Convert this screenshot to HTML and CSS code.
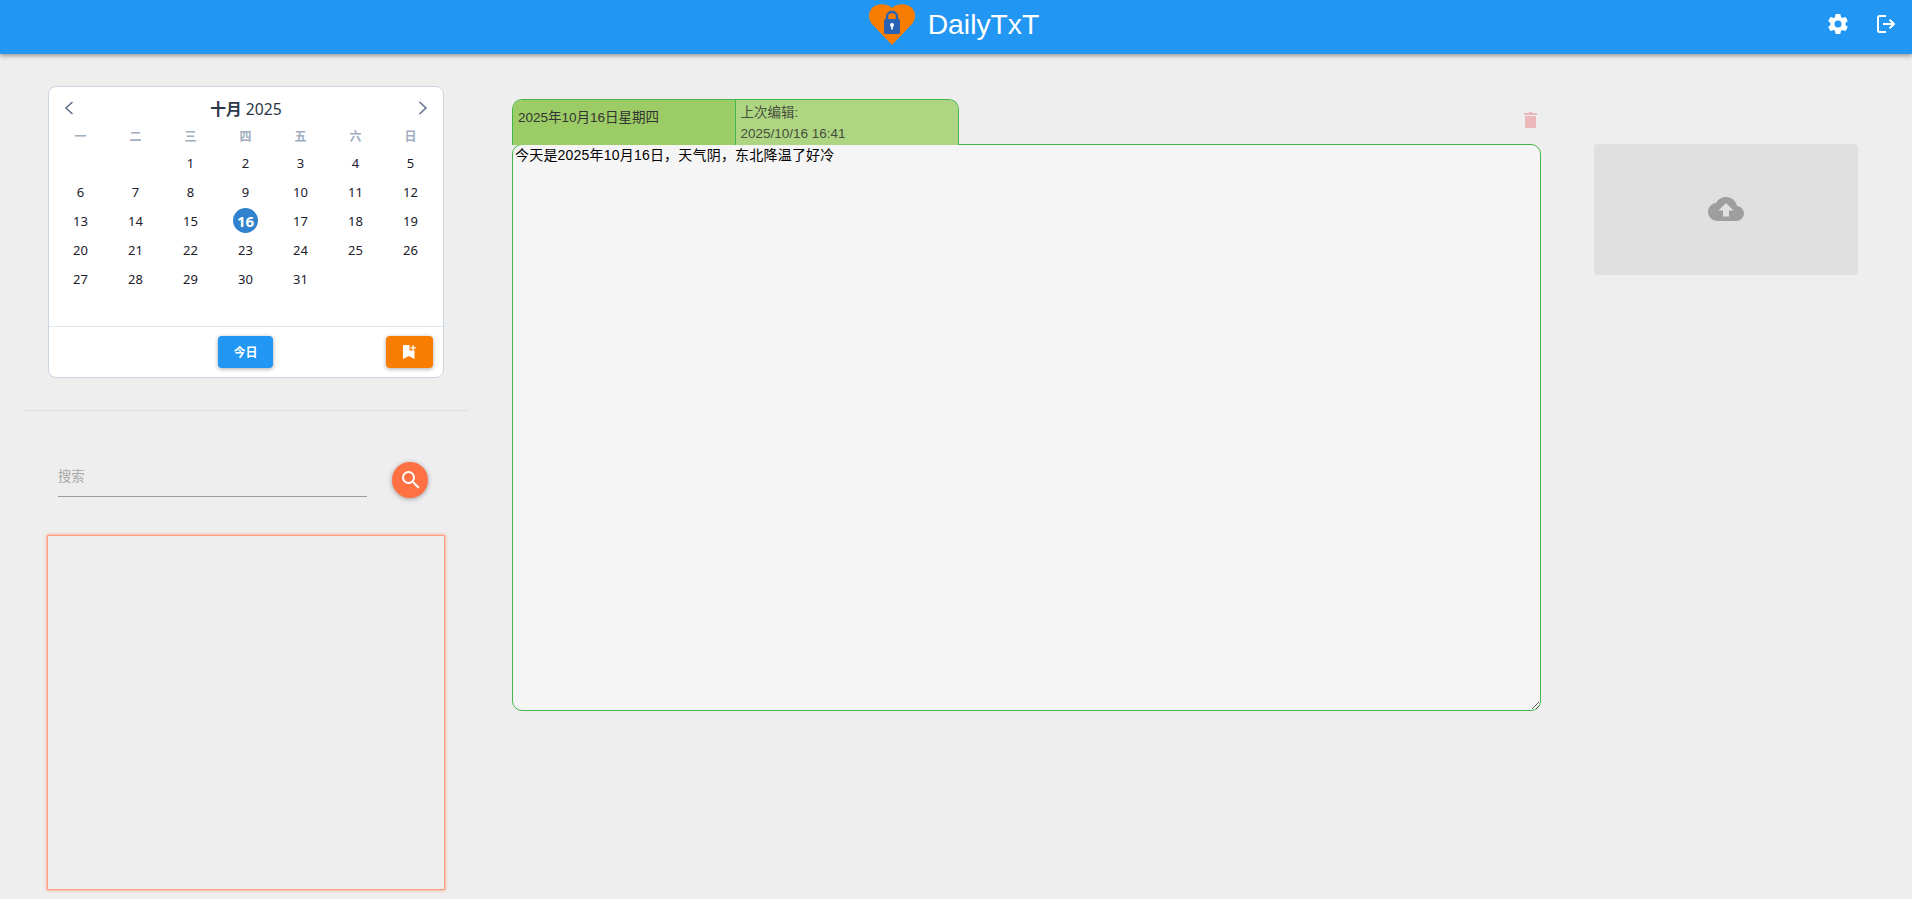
FILE: index.html
```html
<!DOCTYPE html>
<html lang="zh">
<head>
    <meta charset="UTF-8">
    <meta name="viewport" content="width=device-width, initial-scale=1.0">
    <title>DailyTxT</title>

    <link rel="stylesheet" href="styles.css">
</head>
<body>
    <header class="topbar">
        <div></div>
        <div class="brand">
            <svg class="brand-logo" viewBox="0 0 46 42">
                <path class="logo-heart" d="M23 41L3 20C-1 15 -1 8 3 4C8 -1 18 -1 23 4C28 -1 38 -1 43 4C47 8 47 15 43 20Z"/>
                <path class="logo-shackle" d="M18 16V12.500C18 6.500 28 6.500 28 12.500V16"/>
                <rect class="logo-lock" x="15" y="15" width="16" height="15" rx="1.500"/>
                <circle class="logo-key" cx="23" cy="21" r="2"/>
                <rect class="logo-key" x="22.200" y="21" width="1.600" height="4.500"/>
            </svg>
            <span class="brand-name">DailyTxT</span>
        </div>
        <div class="topbar-actions">
            <svg class="icon-settings" viewBox="0 0 24 24"><path d="M12,15.5A3.5,3.5 0 0,1 8.5,12A3.5,3.5 0 0,1 12,8.5A3.5,3.5 0 0,1 15.5,12A3.5,3.5 0 0,1 12,15.5M19.43,12.97C19.47,12.65 19.5,12.33 19.5,12C19.5,11.67 19.47,11.34 19.43,11L21.54,9.37C21.73,9.22 21.78,8.95 21.66,8.73L19.66,5.27C19.54,5.05 19.27,4.96 19.05,5.05L16.56,6.05C16.04,5.66 15.5,5.32 14.87,5.07L14.5,2.42C14.46,2.18 14.25,2 14,2H10C9.75,2 9.54,2.18 9.5,2.42L9.13,5.07C8.5,5.32 7.96,5.66 7.44,6.05L4.95,5.05C4.73,4.96 4.46,5.05 4.34,5.27L2.34,8.73C2.21,8.95 2.27,9.22 2.46,9.37L4.57,11C4.53,11.34 4.5,11.67 4.5,12C4.5,12.33 4.53,12.65 4.57,12.97L2.46,14.63C2.27,14.78 2.21,15.05 2.34,15.27L4.34,18.73C4.46,18.95 4.73,19.03 4.95,18.95L7.44,17.94C7.96,18.34 8.5,18.68 9.13,18.93L9.5,21.58C9.54,21.82 9.75,22 10,22H14C14.25,22 14.46,21.82 14.5,21.58L14.87,18.93C15.5,18.67 16.04,18.34 16.56,17.94L19.05,18.95C19.27,19.03 19.54,18.95 19.66,18.73L21.66,15.27C21.78,15.05 21.73,14.78 21.54,14.63L19.43,12.97Z"/></svg>
            <svg class="icon-logout" viewBox="0 0 18 18"><path d="M9 1H2.500C1.700 1 1 1.700 1 2.500V15.500C1 16.300 1.700 17 2.500 17H9M6 9H17M12.500 4.800L17 9L12.500 13.200"/></svg>
        </div>
    </header>

    <main class="page">
        <aside class="sidebar">
            <section class="calendar">
                <div class="calendar-head">
                    <svg class="calendar-nav" viewBox="0 0 10 14"><path d="M8.500 1L2 7L8.500 13"/></svg>
                    <div class="calendar-title"><b>十月</b> 2025</div>
                    <svg class="calendar-nav" viewBox="0 0 10 14"><path d="M1.500 1L8 7L1.500 13"/></svg>
                </div>
                <div class="calendar-weekdays">
                    <span>一</span><span>二</span><span>三</span><span>四</span><span>五</span><span>六</span><span>日</span>
                </div>
                <div class="calendar-days">
                    <span></span><span></span>
                    <span>1</span><span>2</span><span>3</span><span>4</span><span>5</span>
                    <span>6</span><span>7</span><span>8</span><span>9</span><span>10</span><span>11</span><span>12</span>
                    <span>13</span><span>14</span><span>15</span><span class="today"><b>16</b></span><span>17</span><span>18</span><span>19</span>
                    <span>20</span><span>21</span><span>22</span><span>23</span><span>24</span><span>25</span><span>26</span>
                    <span>27</span><span>28</span><span>29</span><span>30</span><span>31</span>
                </div>
                <div class="calendar-foot">
                    <div></div>
                    <button class="btn btn-today">今日</button>
                    <button class="btn btn-bookmark">
                        <svg viewBox="0 0 13 14"><path d="M0 1C0 .4 .4 0 1 0H6.500V5.500H11.500V14L5.750 11L0 14Z"/><path d="M7.500 2.800H12.800M10.150 .2V5.400" class="bookmark-plus"/></svg>
                    </button>
                </div>
            </section>

            <hr class="divider">

            <div class="search">
                <input class="search-input" type="text" placeholder="搜索">
                <button class="search-btn">
                    <svg viewBox="0 0 24 24"><path d="M9.5,3A6.5,6.5 0 0,1 16,9.5C16,11.11 15.41,12.59 14.44,13.73L14.71,14H15.5L20.5,19L19,20.5L14,15.5V14.71L13.73,14.44C12.59,15.41 11.11,16 9.5,16A6.5,6.5 0 0,1 3,9.5A6.5,6.5 0 0,1 9.5,3M9.5,5C7,5 5,7 5,9.5C5,12 7,14 9.5,14C12,14 14,12 14,9.5C14,7 12,5 9.5,5Z"/></svg>
                </button>
            </div>

            <div class="results"></div>
        </aside>

        <section class="entry">
            <div class="entry-head">
                <div class="tabs">
                    <div class="tab tab-date">2025年10月16日星期四</div>
                    <div class="tab tab-edited">上次编辑:<br>2025/10/16 16:41</div>
                </div>
                <svg class="icon-trash" viewBox="0 0 13 16"><path d="M0 1H4.500L5 0H8L8.500 1H13V3H0ZM1 4H12V15C12 15.600 11.600 16 11 16H2C1.400 16 1 15.600 1 15Z"/></svg>
            </div>
            <textarea class="entry-text">今天是2025年10月16日，天气阴，东北降温了好冷</textarea>
        </section>

        <aside class="files">
            <div class="upload">
                <svg viewBox="0 0 24 24"><path d="M14,13V17H10V13H7L12,8L17,13M19.35,10.03C18.67,6.59 15.64,4 12,4C9.11,4 6.6,5.64 5.35,8.03C2.34,8.36 0,10.9 0,14A6,6 0 0,0 6,20H19A5,5 0 0,0 24,15C24,12.36 21.95,10.22 19.35,10.03Z"/></svg>
            </div>
        </aside>
    </main>
</body>
</html>
```

FILE: styles.css
```css
* {
    margin: 0;
    padding: 0;
    box-sizing: border-box;
}

html, body {
    height: 899px;
    overflow: hidden;
}

body {
    background-color: #eeeeee;
    font-family: "Liberation Sans", "Noto Sans CJK SC", sans-serif;
}

/* top bar */
.topbar {
    display: grid;
    grid-template-columns: 1fr auto 1fr;
    align-items: center;
    height: 54px;
    background-color: #2196f3;
    box-shadow: 0 2px 4px rgba(0,0,0,0.35);
    position: relative;
}

.brand {
    display: flex;
    align-items: center;
    gap: 13px;
    padding-right: 4px;
}

.brand-logo {
    width: 46px;
    height: 42px;
    margin-top: -4px;
}

.logo-heart {
    fill: #f97d00;
}

.logo-shackle {
    fill: none;
    stroke: #2a62b5;
    stroke-width: 2.500;
}

.logo-lock {
    fill: #2a62b5;
}

.logo-key {
    fill: #ffffff;
}

.brand-name {
    color: white;
    font-size: 28.300px;
    margin-bottom: 5px;
}

.topbar-actions {
    display: flex;
    justify-content: flex-end;
    align-items: center;
    gap: 27px;
    padding-right: 17px;
    margin-bottom: 6px;
}

.icon-settings {
    width: 24px;
    height: 24px;
    fill: white;
}

.icon-logout {
    width: 18px;
    height: 18px;
    fill: none;
    stroke: white;
    stroke-width: 2;
}

/* columns */
.page {
    display: flex;
    align-items: flex-start;
}

.sidebar {
    width: 445px;
    margin-left: 23px;
}

.entry {
    width: 1029px;
    margin-left: 44px;
    padding-top: 45px;
}

.files {
    width: 264px;
    margin-left: 53px;
    padding-top: 90px;
}

/* calendar */
.calendar {
    width: 396px;
    height: 292px;
    margin: 32px 0 0 25px;
    background-color: white;
    border: 1px solid #cbd5e0;
    border-radius: 8px;
    color: #1a202c;
    font-family: "Noto Sans", "Noto Sans CJK SC", sans-serif;
}

.calendar-head {
    display: flex;
    justify-content: space-between;
    align-items: center;
    height: 36px;
    padding: 6px 15px 0;
}

.calendar-nav {
    width: 10px;
    height: 14px;
    fill: none;
    stroke: #5f6f8c;
    stroke-width: 1.500;
}

.calendar-title {
    font-size: 15.700px;
    color: #2d3748;
}

.calendar-title b {
    font-weight: 700;
}

.calendar-weekdays,
.calendar-days {
    display: grid;
    grid-template-columns: repeat(7, 55px);
    margin-left: 4px;
    text-align: center;
}

.calendar-weekdays {
    height: 25px;
    align-items: center;
    font-size: 12px;
    font-weight: 700;
    color: #a0aec0;
}

.calendar-days {
    grid-auto-rows: 29px;
    height: 178px;
    font-size: 13px;
    align-items: center;
    justify-items: center;
}

.calendar-days .today {
    display: flex;
    align-items: center;
    justify-content: center;
    width: 25px;
    height: 25px;
    border-radius: 50%;
    background-color: #3182ce;
    color: white;
    font-size: 15px;
}

.calendar-foot {
    display: grid;
    grid-template-columns: 1fr auto 1fr;
    align-items: start;
    height: 51px;
    padding: 9px 10px 0;
    border-top: 1px solid #e2e8f0;
}

.btn {
    height: 32px;
    border: none;
    border-radius: 4px;
    color: white;
    box-shadow: 0 1px 4px rgba(0,0,0,0.35);
    font-family: inherit;
}

.btn-today {
    width: 55px;
    margin-left: -1px;
    background-color: #2196f3;
    font-size: 12px;
    font-weight: 700;
}

.btn-bookmark {
    justify-self: end;
    width: 47px;
    background-color: #f97d00;
}

.btn-bookmark svg {
    display: block;
    width: 13px;
    height: 14px;
    margin: 0 auto;
    fill: white;
}

.bookmark-plus {
    fill: none;
    stroke: white;
    stroke-width: 1.300;
}

/* search */
.divider {
    margin-top: 32px;
    border: none;
    border-top: 1px solid #e0e0e0;
}

.search {
    display: flex;
    align-items: flex-start;
    margin: 51px 0 0 35px;
    height: 36px;
}

.search-input {
    width: 309px;
    height: 35px;
    padding-bottom: 6px;
    border: none;
    border-bottom: 1px solid #9e9e9e;
    background: transparent;
    outline: none;
    font-family: inherit;
    font-size: 13.300px;
}

.search-input::placeholder {
    color: #a8a8a8;
}

.search-btn {
    display: flex;
    align-items: center;
    justify-content: center;
    width: 36px;
    height: 36px;
    margin-left: 25px;
    padding-left: 1px;
    border: none;
    border-radius: 50%;
    background-color: #ff7043;
    box-shadow: 0 1px 5px rgba(0,0,0,0.35);
}

.search-btn svg {
    width: 24px;
    height: 24px;
    fill: white;
}

.results {
    width: 398px;
    height: 355px;
    margin: 37px 0 0 24px;
    border: 1px solid #ff9e80;
    box-shadow: 0 0 3px rgba(255,112,67,0.8);
}

/* entry */
.entry-head {
    display: flex;
    justify-content: space-between;
    align-items: flex-start;
    height: 45px;
    padding-right: 4px;
}

.tabs {
    display: flex;
    width: 447px;
    height: 46px;
    border: 1px solid #44b54a;
    border-bottom: none;
    border-radius: 10px 10px 0 0;
    overflow: hidden;
    font-size: 13.500px;
    color: #333333;
}

.tab {
    width: 50%;
    padding: 2px 4px 0 5px;
    line-height: 21px;
}

.tab-date {
    background-color: #9ccc65;
    border-right: 1px solid #44b54a;
    padding: 0 4px;
    line-height: 36px;
}

.tab-date {
    padding-left: 5px;
}

.tab-edited {
    background-color: #aed581;
    color: #454f3c;
}

.icon-trash {
    width: 13px;
    height: 16px;
    margin-top: 13px;
    fill: #ecb8ba;
}

.entry-text {
    display: block;
    width: 1029px;
    height: 567px;
    padding: 2px;
    border: 1px solid #44b54a;
    border-radius: 10px;
    background-color: #f5f5f5;
    outline: none;
    font-family: "Liberation Sans", "Noto Sans CJK SC", sans-serif;
    font-size: 14px;
    letter-spacing: .2px;
    line-height: 17px;
    color: black;
}

/* upload */
.upload {
    display: flex;
    align-items: center;
    justify-content: center;
    height: 131px;
    padding-bottom: 2px;
    background-color: #e0e0e0;
    border-radius: 4px;
}

.upload svg {
    width: 36px;
    height: 36px;
    fill: #9e9e9e;
}
```
